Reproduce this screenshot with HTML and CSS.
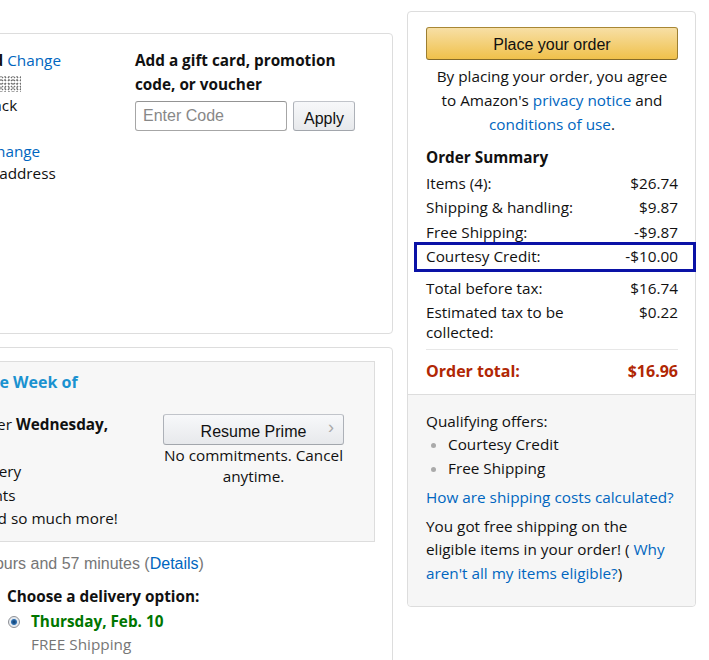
FILE: index.html
```html
<!DOCTYPE html>
<html lang="en">
<head>
  <meta charset="UTF-8" />
  <meta name="viewport" content="width=device-width, initial-scale=1.0"/>
  <title>Review your order</title>
  <link rel="stylesheet" href="styles.css">
</head>
<body>
  <div class="checkout">

    <!-- Left: order details (page is scrolled, left part is off view) -->
    <div class="main-col">
      <div class="box review-box">
        <div class="info-col">
          <p><b>Shipping address</b> <a href="#">Change</a></p>
          <p>Jane Doe</p>
          <p>1200 Main St</p>
          <p>Seattle, WA 98101</p>
        </div>
        <div class="info-col">
          <p><b>Payment method</b> <a href="#">Change</a></p>
          <p>Visa ending in <span class="masked"></span></p>
          <p>Unlimited Cash Back</p>
          <p class="spaced"><b>Billing address</b> <a href="#">Change</a></p>
          <p>Same as shipping address</p>
        </div>
        <div class="gift-col">
          <h3>Add a gift card, promotion code, or voucher</h3>
          <div class="code-form">
            <input type="text" placeholder="Enter Code" />
            <button class="btn-gray">Apply</button>
          </div>
        </div>
      </div>

      <div class="box items-box">
        <div class="prime-offer">
          <div class="prime-logo">prime</div>
          <div class="prime-body">
            <h4>Get FREE delivery the Week of</h4>
            <div class="prime-row">
              <div class="prime-text">
                <p>Guaranteed if you order <b>Wednesday,</b></p>
                <p><b>Feb. 2</b></p>
                <p>Unlimited – FREE Delivery</p>
                <p>Members-only discounts</p>
                <p>Prime Video, Music and so much more!</p>
              </div>
              <div class="prime-cta">
                <button class="btn-gray btn-resume">Resume Prime <span class="chev">›</span></button>
                <p>No commitments. Cancel anytime.</p>
              </div>
            </div>
          </div>
        </div>

        <p class="cutoff">Order within 3 hours and 57 minutes (<a href="#">Details</a>)</p>

        <div class="item-row">
          <div class="item-info">
            <p><b>Kitchen storage set</b></p>
          </div>
          <div class="delivery">
            <h5>Choose a delivery option:</h5>
            <label class="option">
              <span class="radio"></span>
              <span>
                <span class="option-date">Thursday, Feb. 10</span>
                <span class="option-note">FREE Shipping</span>
              </span>
            </label>
          </div>
        </div>
      </div>
    </div>

    <!-- Right: order summary -->
    <div class="side-col">
      <div class="box summary-box">
        <div class="summary-top">
          <button class="btn-yellow">Place your order</button>
          <p class="agree">By placing your order, you agree to Amazon's <a href="#">privacy notice</a> and <a href="#">conditions of use</a>.</p>

          <h3>Order Summary</h3>
          <div class="row"><span>Items (4):</span><span>$26.74</span></div>
          <div class="row"><span>Shipping &amp; handling:</span><span>$9.87</span></div>
          <div class="row"><span>Free Shipping:</span><span>-$9.87</span></div>
          <div class="row marked"><span>Courtesy Credit:</span><span>-$10.00</span></div>
          <div class="row before-tax"><span>Total before tax:</span><span>$16.74</span></div>
          <div class="row"><span class="label-wrap">Estimated tax to be collected:</span><span>$0.22</span></div>
          <div class="row total"><span>Order total:</span><span>$16.96</span></div>
        </div>

        <div class="summary-bottom">
          <p>Qualifying offers:</p>
          <ul>
            <li>Courtesy Credit</li>
            <li>Free Shipping</li>
          </ul>
          <p class="shipping-link"><a href="#">How are shipping costs calculated?</a></p>
          <p>You got free shipping on the eligible items in your order! ( <a href="#">Why aren't all my items eligible?</a>)</p>
        </div>
      </div>
    </div>

  </div>
</body>
</html>
```

FILE: styles.css
```css
body {
  margin: 0;
  font-family: 'Open Sans', 'Noto Sans', sans-serif;
  font-size: 15.3px;
  color: #111;
  background: #fff;
  overflow: hidden;
}

p {
  margin: 0;
}

a {
  color: #0066c0;
  text-decoration: none;
}

/* page is scrolled sideways: left column starts off view */
.checkout {
  display: flex;
  gap: 14px;
  margin-left: -300px;
}

.main-col {
  width: 693px;
  flex-shrink: 0;
  padding-top: 33px;
}

.side-col {
  width: 289px;
  flex-shrink: 0;
  padding-top: 11px;
}

.box {
  border: 1px solid #ddd;
  border-radius: 4px;
  background: #fff;
}

/* Review box */
.review-box {
  display: grid;
  grid-template-columns: 143px 255px 1fr;
  column-gap: 9px;
  min-height: 301px;
  padding: 14px 18px;
  box-sizing: border-box;
}

.info-col p {
  line-height: 22.6px;
}

.info-col p:first-child {
  margin-top: 1px;
}

.info-col .spaced {
  margin-top: 23px;
}

.masked {
  display: inline-block;
  width: 47px;
  height: 16px;
  vertical-align: -3px;
  background-image:
    radial-gradient(#555 0.7px, transparent 1.1px),
    radial-gradient(#999 0.7px, transparent 1.1px);
  background-size: 3px 3px, 4px 4px;
  background-position: 0 0, 1px 2px;
  opacity: 0.85;
}

.gift-col h3 {
  margin: 0;
  font-size: 15.3px;
  font-weight: bold;
  line-height: 24px;
  color: #111;
}

.code-form {
  display: flex;
  gap: 6px;
  margin-top: 5px;
}

.code-form input {
  width: 152px;
  height: 30px;
  box-sizing: border-box;
  border: 1px solid #a6a6a6;
  border-top-color: #949494;
  border-radius: 3px;
  padding: 0 7px;
  font-family: 'Liberation Sans', Arial, sans-serif;
  font-size: 16px;
}

.code-form input::placeholder {
  color: #888;
}

.btn-gray {
  font-family: 'Liberation Sans', Arial, sans-serif;
  font-size: 16px;
  color: #111;
  background: linear-gradient(#f7f8fa, #e7e9ec);
  border: 1px solid #adb1b8;
  border-top-color: #c1c4ca;
  border-bottom-color: #a2a6ac;
  border-radius: 3px;
  cursor: pointer;
}

.code-form .btn-gray {
  width: 62px;
  height: 30px;
  padding: 5px 0 0;
}

/* Items box */
.items-box {
  margin-top: 13px;
  padding: 13px 17px 20px;
}

.prime-offer {
  display: flex;
  gap: 27px;
  background: #f7f7f7;
  border: 1px solid #ddd;
  padding: 8px 0 8px 14px;
  height: 181px;
  box-sizing: border-box;
}

.prime-logo {
  width: 80px;
  color: #1a98d5;
  font-weight: bold;
  font-style: italic;
  font-size: 22px;
  padding-top: 4px;
}

.prime-body {
  flex: 1;
}

.prime-body h4 {
  margin: 0;
  font-size: 16px;
  line-height: 24px;
  color: #1a92d0;
}

.prime-row {
  display: flex;
  margin-top: 19px;
}

.prime-text {
  flex: 1;
}

.prime-text p {
  line-height: 23.5px;
}

.prime-cta {
  width: 181px;
  margin-right: 30px;
  text-align: center;
  padding-top: 1px;
}

.btn-resume {
  position: relative;
  width: 181px;
  height: 31px;
  padding: 5px 0 0;
  text-align: center;
}

.chev {
  position: absolute;
  right: 9px;
  top: 2px;
  color: #aaa;
  font-size: 18px;
}

.prime-cta p {
  line-height: 21px;
}

.cutoff {
  font-family: 'Liberation Sans', Arial, sans-serif;
  font-size: 16px;
  color: #767676;
  margin: 13px 0 0 164px;
}

.item-row {
  display: grid;
  grid-template-columns: 1fr 368px;
  column-gap: 10px;
  margin-top: 12px;
}

.delivery h5 {
  margin: 0 0 3px;
  font-size: 15.3px;
  font-weight: bold;
  line-height: 22px;
}

.option {
  display: flex;
  gap: 11px;
}

.radio {
  width: 12px;
  height: 12px;
  margin: 6px 0 0 1px;
  border-radius: 50%;
  border: 1px solid #8d9096;
  background: radial-gradient(circle, #0e3b68 0, #2d6fb0 2.5px, #dfe6ee 3.5px, #f3f3f3 6px);
  box-sizing: border-box;
}

.option-date {
  display: block;
  color: #007600;
  font-weight: bold;
  font-size: 15.3px;
  line-height: 23px;
}

.option-note {
  display: block;
  color: #767676;
  line-height: 23px;
}

/* Summary box */
.summary-top {
  padding: 15px 17px 10px 18px;
}

.btn-yellow {
  display: block;
  width: 100%;
  height: 33px;
  padding-top: 3px;
  font-family: 'Liberation Sans', Arial, sans-serif;
  font-size: 16px;
  color: #111;
  background: linear-gradient(#f7dfa5, #f0c14b);
  border: 1px solid #a88734;
  border-color: #a88734 #9c7e31 #846a29;
  border-radius: 3px;
  cursor: pointer;
}

.agree {
  text-align: center;
  line-height: 24px;
  margin-top: 4px;
  padding: 0 8px;
}

.summary-top h3 {
  margin: 9px 0 2px;
  font-size: 15.3px;
  line-height: 24px;
}

.row {
  display: flex;
  justify-content: space-between;
  line-height: 19.5px;
  padding: 2.5px 0;
}

.label-wrap {
  width: 160px;
}

.row.marked {
  border: 3px solid #0a12a6;
  margin: -3px -18px 0 -12px;
  padding: 2px 15px 3px 9px;
}

.row.before-tax {
  margin-top: 4px;
}

.row.total {
  margin-top: 4px;
  padding-top: 12px;
  border-top: 1px solid #e7e7e7;
  color: #b12704;
  font-weight: bold;
  font-size: 16px;
}

.summary-bottom {
  background: #f6f6f6;
  border-top: 1px solid #ddd;
  padding: 15px 17px 21px 18px;
  border-radius: 0 0 4px 4px;
}

.summary-bottom p {
  line-height: 23.5px;
}

.summary-bottom ul {
  margin: 0;
  padding-left: 22px;
  line-height: 23.5px;
}

.summary-bottom li::marker {
  color: #aaa;
}

.shipping-link {
  margin: 6px 0 5px;
}
```
